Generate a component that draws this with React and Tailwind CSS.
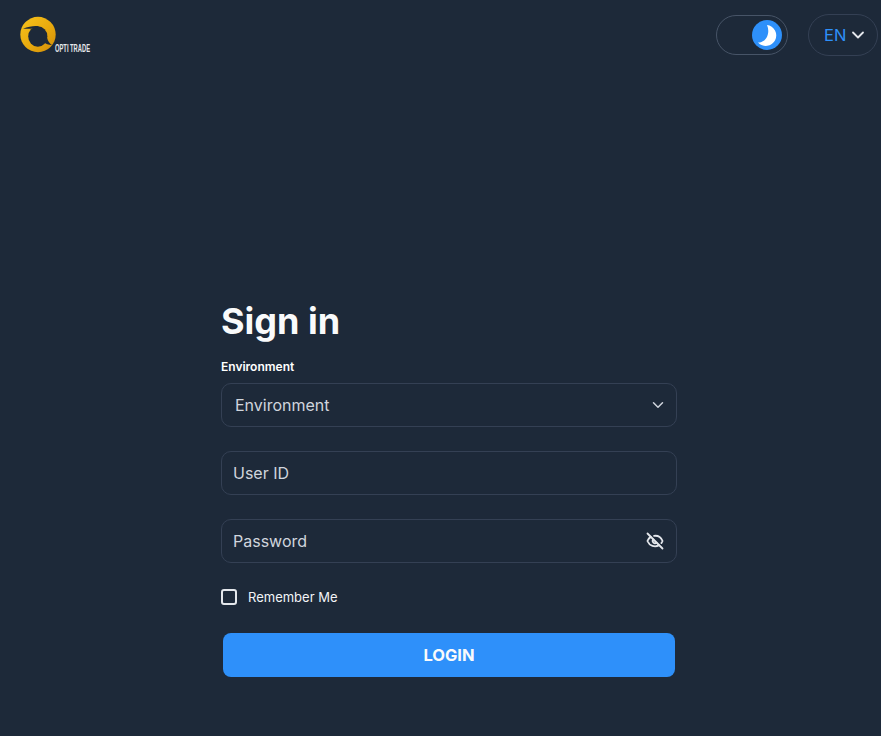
import React from 'react';
import { ChevronDown, EyeOff } from 'lucide-react';

function Logo() {
  return (
    <svg width="100" height="40" viewBox="0 0 100 40" className="block">
      <defs>
        <linearGradient id="ring" x1="0" y1="0" x2="1" y2="1">
          <stop offset="0" stopColor="#f7c31c" />
          <stop offset="0.55" stopColor="#e8a90e" />
          <stop offset="1" stopColor="#d08c08" />
        </linearGradient>
      </defs>
      {/* ring, the hole swirls out into two thin tails */}
      <circle cx="18" cy="18.5" r="17.7" fill="url(#ring)" />
      <ellipse cx="17.8" cy="20.5" rx="9.6" ry="10.2" fill="#1d2939" />
      <path d="M3 12.8 C9 10.4 15 9.4 19 10.4 L14 12.4 C10 12.8 6 12.6 3 12.8 Z" fill="#1d2939" />
      <path d="M27.2 22 C27.8 25 29.5 27.5 32 29 C28.5 28.8 25.5 28 24.5 26.5 Z" fill="#1d2939" />
      <text x="35" y="36" fontSize="10.5" fontWeight="700" fill="#e5e7eb" textLength="35" lengthAdjust="spacingAndGlyphs" fontFamily="'Liberation Sans', sans-serif">OPTI TRADE</text>
    </svg>
  );
}

function Field({ placeholder, children, px = 'pl-[11px] pr-3' }) {
  return (
    <div className={`flex h-11 items-center justify-between rounded-[10px] border border-[#344054] ${px}`}>
      <span className="text-base text-[#d0d5dd]">{placeholder}</span>
      {children}
    </div>
  );
}

export default function App() {
  return (
    <div className="h-[736px] overflow-hidden bg-[#1d2939] font-['Inter',sans-serif] text-white">
      {/* Top bar */}
      <header className="flex items-start justify-between pl-5 pr-[3px] pt-[14px]">
        <div className="pt-[2px]">
          <Logo />
        </div>
        <div className="flex items-center gap-5">
          <div className="flex h-10 w-[72px] items-center justify-end rounded-full border border-[#475467] pr-[5px]">
            <div className="flex h-[30px] w-[30px] items-center justify-center rounded-full bg-[#2e90fa]">
              <svg width="26" height="26" viewBox="0 0 26 26">
                <path d="M13 3 A10.5 10.5 0 1 1 4 20.5 C11 21 17 12 13 3 Z" fill="#fff" />
              </svg>
            </div>
          </div>
          <div className="flex h-[42px] w-[70px] items-center justify-between rounded-full border border-[#344054] pl-[15px] pr-[9px]">
            <span className="pt-[1px] text-[16.5px] text-[#2e90fa]">EN</span>
            <ChevronDown size={20} strokeWidth={2.2} className="text-[#e4e7ec]" />
          </div>
        </div>
      </header>

      {/* Sign in form */}
      <main className="ml-[221px] mt-[243px] w-[456px]">
        <h1 className="text-[36px] font-bold leading-[44px] text-[#f9fafb]">Sign in</h1>
        <label className="mt-[15px] block text-xs font-semibold leading-[18px]">Environment</label>
        <div className="mt-[7px]">
          <Field placeholder="Environment" px="pl-[13px] pr-[9px]">
            <ChevronDown size={18} strokeWidth={2} className="text-[#d0d5dd]" />
          </Field>
        </div>
        <div className="mt-6">
          <Field placeholder="User ID" />
        </div>
        <div className="mt-6">
          <Field placeholder="Password" px="pl-[11px] pr-3">
            <EyeOff size={18} strokeWidth={2.4} className="text-[#e4e7ec]" />
          </Field>
        </div>
        <div className="mt-[25px] flex items-center gap-[11px]">
          <div className="h-4 w-4 rounded-[3px] border-2 border-[#e4e7ec]" />
          <span className="text-[13px] leading-[18px] text-[#f2f4f7]">Remember Me</span>
        </div>
        <button className="mx-[2px] mt-[27px] flex h-11 w-[452px] items-center justify-center rounded-lg bg-[#2e90fa] text-[16.5px] font-bold text-[#f9fafb]">
          LOGIN
        </button>
      </main>
    </div>
  );
}
